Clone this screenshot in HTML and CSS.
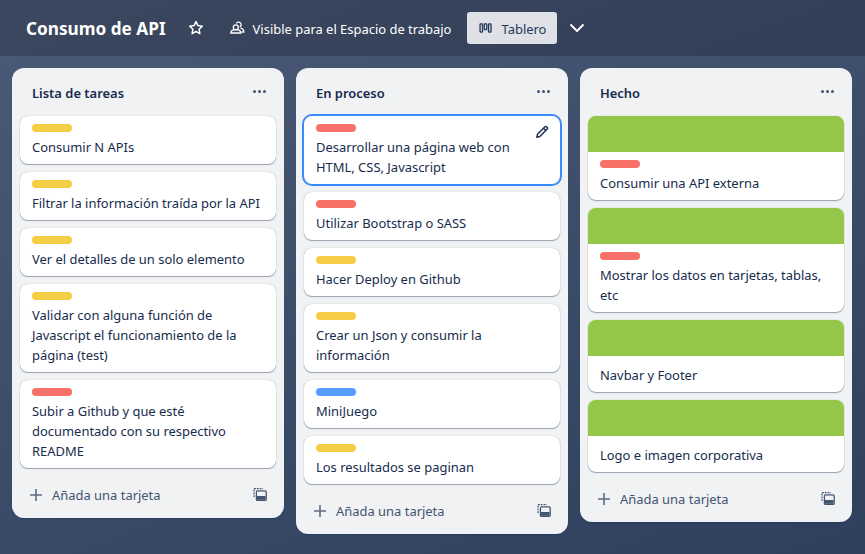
FILE: index.html
```html
<!DOCTYPE html>
<html lang="es">
<head>
<meta charset="utf-8">
<title>Consumo de API</title>
<link rel="stylesheet" href="styles.css">
</head>
<body>
<header class="topbar">
  <h1 class="board-title">Consumo de API</h1>
  <svg class="star" width="16" height="16" viewBox="0 0 16 16"><path d="M8 1.600l1.900 4 4.400.6-3.200 3 .8 4.400L8 11.500l-3.900 2.100.8-4.400-3.200-3 4.400-.6z" fill="none" stroke="#fff" stroke-width="1.500" stroke-linejoin="round"/></svg>
  <div class="visibility">
    <svg width="16" height="16" viewBox="0 0 16 16" fill="none" stroke="#fff" stroke-width="1.300"><circle cx="6.800" cy="7.300" r="2.500"/><path d="M1.800 13c0-2 2-3.300 5-3.300s5 1.300 5 3.300z"/><path d="M7.300 3.400a2.600 2.600 0 1 1 3.500 3.600"/><path d="M11.500 8.200c1.900.4 3.300 1.700 3.300 3.800h-2.300"/></svg>
    <span>Visible para el Espacio de trabajo</span>
  </div>
  <button class="view-btn">
    <svg width="16" height="16" viewBox="0 0 16 16" fill="none" stroke="#253858" stroke-width="1.400"><rect x="2.200" y="3.700" width="2.600" height="8.600" rx=".6"/><rect x="6.700" y="3.700" width="2.600" height="6" rx=".6"/><rect x="11.200" y="3.700" width="2.600" height="8.600" rx=".6"/></svg>
    <span>Tablero</span>
  </button>
  <svg class="chevron" width="16" height="16" viewBox="0 0 16 16"><path d="M2 5l6 6 6-6" fill="none" stroke="#fff" stroke-width="1.800" stroke-linecap="round" stroke-linejoin="round"/></svg>
</header>
<main class="board">
  <section class="list">
    <div class="list-head"><h2>Lista de tareas</h2><span class="dots"><i></i><i></i><i></i></span></div>
    <div class="cards">
      <article class="card"><div class="label yellow"></div><p>Consumir N APIs</p></article>
      <article class="card"><div class="label yellow"></div><p>Filtrar la información traída por la API</p></article>
      <article class="card"><div class="label yellow"></div><p>Ver el detalles de un solo elemento</p></article>
      <article class="card"><div class="label yellow"></div><p>Validar con alguna función de Javascript el funcionamiento de la página (test)</p></article>
      <article class="card"><div class="label red"></div><p>Subir a Github y que esté documentado con su respectivo README</p></article>
    </div>
    <div class="list-foot">
      <svg class="plus" width="16" height="16" viewBox="0 0 16 16"><path d="M8 2v12M2 8h12" stroke="#5e6c84" stroke-width="1.600"/></svg>
      <span class="add">Añada una tarjeta</span>
      <svg class="tmpl" width="14" height="14" viewBox="0 0 14 14" fill="none" stroke="#44546f"><path d="M1 9V.6h9" stroke-dasharray="1.800 1" stroke-width="1.200"/><rect x="3.400" y="2.800" width="9.800" height="9.600" rx="1.200" stroke-width="1.300"/><rect x="4" y="8" width="8.500" height="3.800" fill="#44546f" stroke="none"/></svg>
    </div>
  </section>
  <section class="list">
    <div class="list-head"><h2>En proceso</h2><span class="dots"><i></i><i></i><i></i></span></div>
    <div class="cards">
      <article class="card active"><div class="label red"></div><p>Desarrollar una página web con HTML, CSS, Javascript</p>
        <svg class="edit" width="14" height="14" viewBox="0 0 14 14" fill="none" stroke="#172b4d" stroke-width="1.400" stroke-linejoin="round"><path d="M1.800 12.200l.7-3L9.700 2q1-1 2 0l.3.300q1 1 0 2L4.800 11.500z"/><path d="M8.500 3.200l2.300 2.300"/></svg>
      </article>
      <article class="card"><div class="label red"></div><p>Utilizar Bootstrap o SASS</p></article>
      <article class="card"><div class="label yellow"></div><p>Hacer Deploy en Github</p></article>
      <article class="card"><div class="label yellow"></div><p>Crear un Json y consumir la información</p></article>
      <article class="card"><div class="label blue"></div><p>MiniJuego</p></article>
      <article class="card"><div class="label yellow"></div><p>Los resultados se paginan</p></article>
    </div>
    <div class="list-foot">
      <svg class="plus" width="16" height="16" viewBox="0 0 16 16"><path d="M8 2v12M2 8h12" stroke="#5e6c84" stroke-width="1.600"/></svg>
      <span class="add">Añada una tarjeta</span>
      <svg class="tmpl" width="14" height="14" viewBox="0 0 14 14" fill="none" stroke="#44546f"><path d="M1 9V.6h9" stroke-dasharray="1.800 1" stroke-width="1.200"/><rect x="3.400" y="2.800" width="9.800" height="9.600" rx="1.200" stroke-width="1.300"/><rect x="4" y="8" width="8.500" height="3.800" fill="#44546f" stroke="none"/></svg>
    </div>
  </section>
  <section class="list">
    <div class="list-head"><h2>Hecho</h2><span class="dots"><i></i><i></i><i></i></span></div>
    <div class="cards">
      <article class="card covered"><div class="cover"></div><div class="label red"></div><p>Consumir una API externa</p></article>
      <article class="card covered"><div class="cover"></div><div class="label red"></div><p>Mostrar los datos en tarjetas, tablas, etc</p></article>
      <article class="card covered"><div class="cover"></div><p>Navbar y Footer</p></article>
      <article class="card covered"><div class="cover"></div><p>Logo e imagen corporativa</p></article>
    </div>
    <div class="list-foot">
      <svg class="plus" width="16" height="16" viewBox="0 0 16 16"><path d="M8 2v12M2 8h12" stroke="#5e6c84" stroke-width="1.600"/></svg>
      <span class="add">Añada una tarjeta</span>
      <svg class="tmpl" width="14" height="14" viewBox="0 0 14 14" fill="none" stroke="#44546f"><path d="M1 9V.6h9" stroke-dasharray="1.800 1" stroke-width="1.200"/><rect x="3.400" y="2.800" width="9.800" height="9.600" rx="1.200" stroke-width="1.300"/><rect x="4" y="8" width="8.500" height="3.800" fill="#44546f" stroke="none"/></svg>
    </div>
  </section>
</main>
</body>
</html>
```
FILE: styles.css
```css
* { box-sizing: border-box; }
html, body { height: 100%; }
body {
  margin: 0;
  overflow: hidden;
  font-family: "Noto Sans", Roboto, sans-serif;
  font-size: 12.95px;
  line-height: 20px;
  color: #172b4d;
  background: linear-gradient(160deg, #4a5a77 0%, #2f405f 100%);
}
.topbar {
  display: flex;
  align-items: center;
  height: 56px;
  padding-left: 26px;
  background: rgba(0, 0, 0, 0.2);
  color: #fff;
}
.board-title { margin: 0; padding-top: 2px; font-size: 17.2px; line-height: 32px; font-weight: 700; }
.star { margin-left: 22px; }
.visibility { display: flex; align-items: center; margin-left: 25px; gap: 8px; }
.visibility span, .view-btn span { padding-top: 2px; }
.view-btn {
  display: flex;
  align-items: center;
  gap: 8px;
  width: 90px;
  height: 32px;
  margin-left: 16px;
  padding: 0 11px;
  border: 0;
  border-radius: 3px;
  background: #dfe1e6;
  color: #253858;
  font: inherit;
}
.chevron { margin-left: 12px; }
.board {
  display: flex;
  align-items: flex-start;
  gap: 12px;
  padding: 12px 12px 0;
}
.list {
  width: 272px;
  border-radius: 12px;
  background: #f1f2f4;
  box-shadow: 0 1px 1px rgba(9, 30, 66, .25);
}
.list-head {
  display: flex;
  align-items: center;
  justify-content: space-between;
  height: 48px;
  padding: 2px 18px 0 20px;
}
.list-head h2 { margin: 0; font-size: 12.95px; line-height: 20px; font-weight: 600; }
.dots { display: flex; gap: 2px; margin-top: -4px; }
.dots i { width: 3px; height: 3px; border-radius: 50%; background: #44546f; }
.cards { display: flex; flex-direction: column; gap: 8px; padding: 0 8px; }
.card {
  position: relative;
  padding: 8px 12px 7px;
  border-radius: 8px;
  background: #fff;
  box-shadow: 0 1px 1px rgba(9, 30, 66, .35), 0 0 1px rgba(9, 30, 66, .35);
}
.card p { margin: 0; }
.card.active { outline: 2px solid #388bff; outline-offset: 0; box-shadow: none; }
.label { width: 40px; height: 8px; margin-bottom: 5px; border-radius: 4px; }
.yellow { background: #f5cd47; }
.red { background: #f87168; }
.blue { background: #579dff; }
.covered { overflow: hidden; padding-top: 0; }
.cover { height: 36px; margin: 0 -12px 8px; background: #94c748; }
.cover:has(+ p) { margin-bottom: 9px; }
.edit { position: absolute; top: 9px; right: 11px; }
.list-foot {
  display: flex;
  align-items: center;
  height: 50px;
  padding: 4px 17px 0 16px;
  color: #44546f;
}
.add { margin-left: 8px; }
.tmpl { margin-left: auto; }
```
